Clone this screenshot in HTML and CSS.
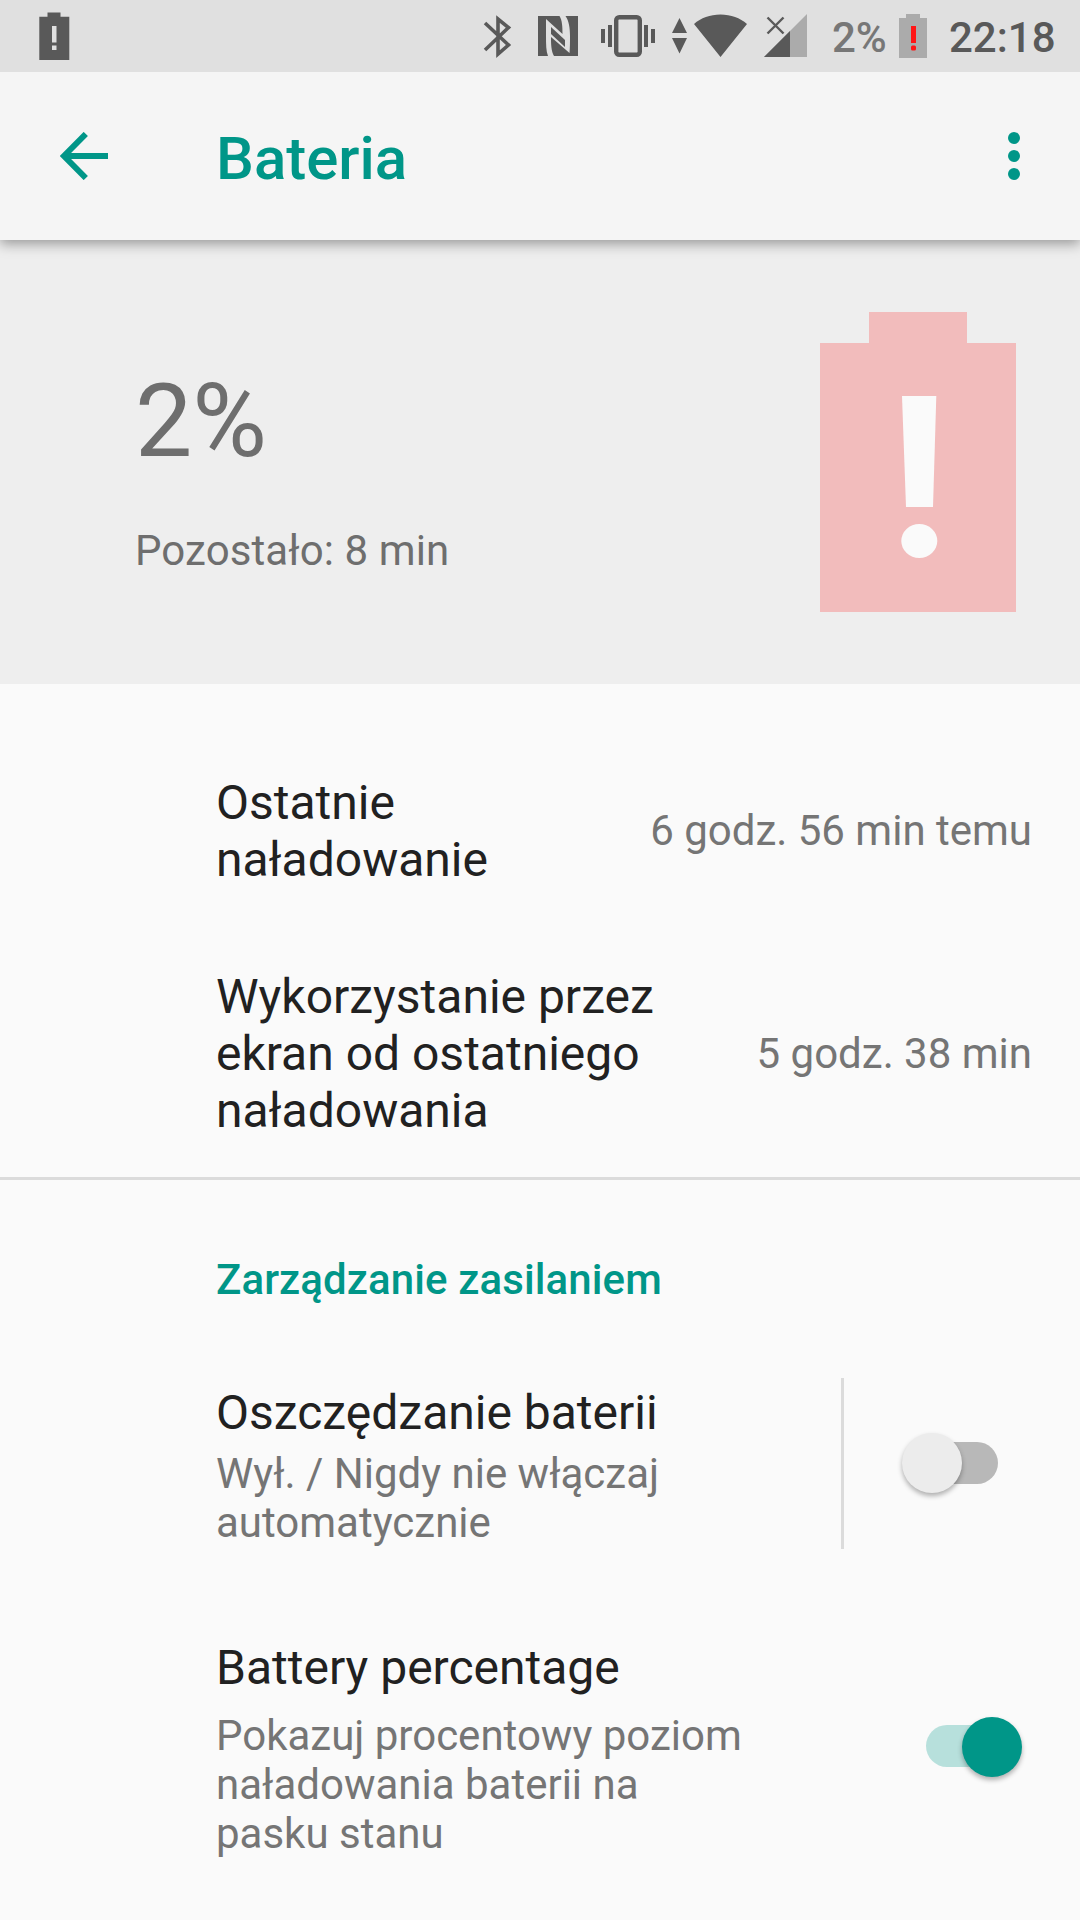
FILE: index.html
```html
<!DOCTYPE html>
<html lang="pl">
<head>
  <meta charset="UTF-8">
  <meta name="viewport" content="width=device-width, initial-scale=1">
  <title>Bateria</title>
  <link rel="stylesheet" href="styles.css">
</head>
<body>
  <div class="status-bar">
    <svg class="status-left" width="72" height="72" viewBox="0 0 72 72">
      <path fill="#595959" fill-rule="evenodd" d="M47.5 12.5h13v4.2h8.8V60h-30V16.700h8.200zM52 26v16.500h4.500V26zM52 45.500v4.500h4.500v-4.500z"/>
    </svg>
    <svg class="status-icons" width="350" height="72" viewBox="470 0 350 72">
      <!-- bluetooth -->
      <path fill="none" stroke="#595959" stroke-width="3.600" d="M485 23l23.500 22L498 54V19l10.500 8.500L485 50"/>
      <!-- nfc -->
      <path fill="#595959" d="M538 16h40v40h-40z"/>
      <path fill="#e0e0e0" d="M546 19l16.500 15c0-7-.3-14-3-18h6c3.500 5 4.500 12 4.500 20 0 6 0 12-.5 17L551 37c0 7 .2 14 3 19h-6c-2-5-2-12-2-20z"/>
      <path fill="#595959" d="M551 27l14 13v7L551 34z"/>
      <!-- vibrate -->
      <rect x="616.200" y="17.200" width="23.600" height="37.600" rx="3" fill="none" stroke="#595959" stroke-width="4.400"/>
      <path fill="#595959" d="M601 29h4v14h-4zM608 25h4v22h-4zM644 25h4v22h-4zM651 29h4v14h-4z"/>
      <!-- data arrows + wifi -->
      <path fill="#595959" d="M679.500 18l7.500 15h-15zM672 38h15l-7.500 15.500zM720.500 57L694 24c7-6 16-9.500 26.500-9.500S740 18 747 24z"/>
      <!-- mobile signal -->
      <path fill="#ababab" d="M807 14v43h-43z"/>
      <path fill="#595959" d="M790 31v26h-26z"/>
      <path fill="none" stroke="#595959" stroke-width="2.400" d="M767.500 17.500l16 16M783.500 17.500l-16 16"/>
    </svg>
    <span class="status-percent">2%</span>
    <svg class="status-battery" width="28" height="72" viewBox="899 0 28 72">
      <path fill="#ababab" d="M906 14h14v4h7v40h-28V18h7z"/>
      <path fill="#ff1515" d="M911 26h5v17h-5z"/>
      <rect x="911" y="45.500" width="5" height="5" rx="1.500" fill="#ff1515"/>
    </svg>
    <span class="status-time">22:18</span>
  </div>

  <div class="app-bar">
    <svg class="back" width="48" height="48" viewBox="0 0 48 48">
      <path fill="none" stroke="#009688" stroke-width="6" d="M48 24H4M25.800 2L4 24l21.800 22"/>
    </svg>
    <h1>Bateria</h1>
    <svg class="more" width="12" height="48" viewBox="0 0 12 48" fill="#009688">
      <circle cx="6" cy="6" r="6"/>
      <circle cx="6" cy="24" r="6"/>
      <circle cx="6" cy="42" r="6"/>
    </svg>
  </div>

  <div class="hero">
    <div>
      <div class="percent">2%</div>
      <div class="remaining">Pozostało: 8 min</div>
    </div>
    <svg width="196" height="300" viewBox="0 0 196 300">
      <path fill="#f2bcbc" d="M49 0h98v31h49v269H0V31h49z"/>
      <path fill="#fafafa" d="M82 84h34.300l-3.300 111H86z"/>
      <ellipse cx="99.300" cy="229" rx="18" ry="17" fill="#fafafa"/>
    </svg>
  </div>

  <div class="usage">
    <div class="row">
      <div class="title">Ostatnie<br>naładowanie</div>
      <div class="value">6 godz. 56 min temu</div>
    </div>
    <div class="row">
      <div class="title">Wykorzystanie przez<br>ekran od ostatniego<br>naładowania</div>
      <div class="value">5 godz. 38 min</div>
    </div>
  </div>

  <div class="settings">
    <h2>Zarządzanie zasilaniem</h2>
    <div class="setting saver">
      <div class="text">
        <div class="title">Oszczędzanie baterii</div>
        <div class="summary">Wył. / Nigdy nie włączaj<br>automatycznie</div>
      </div>
      <div class="separator"></div>
      <div class="switch"><div class="thumb"></div></div>
    </div>
    <div class="setting percentage">
      <div class="text">
        <div class="title">Battery percentage</div>
        <div class="summary">Pokazuj procentowy poziom<br>naładowania baterii na<br>pasku stanu</div>
      </div>
      <div class="switch on"><div class="thumb"></div></div>
    </div>
  </div>
</body>
</html>
```
FILE: styles.css
```css
:root {
  --accent: #009688;
  --bg: #fafafa;
  --text: #212121;
  --text-secondary: #757575;
  --divider: #dbdbdb;
}
*, *::before, *::after {
  box-sizing: border-box;
}
body {
  margin: 0;
  width: 1080px;
  height: 1920px;
  overflow: hidden;
  font-family: Roboto, sans-serif;
  background: var(--bg);
  color: var(--text);
}
svg {
  display: block;
  flex: none;
}
.status-bar {
  position: relative;
  z-index: 2;
  display: flex;
  height: 72px;
  background: #e0e0e0;
  line-height: 75px;
  white-space: nowrap;
}
.status-icons {
  margin-left: 398px;
}
.status-percent {
  width: 67px;
  margin-left: 12px;
  font-size: 42px;
  font-weight: 500;
  color: #777;
}
.status-time {
  margin-left: 22px;
  font-size: 42px;
  font-weight: 500;
  color: #595959;
}
.app-bar {
  position: relative;
  display: flex;
  align-items: center;
  height: 168px;
  padding: 0 60px;
  background: #f5f5f5;
  box-shadow: 0 4px 12px rgba(0, 0, 0, 0.36);
}
.app-bar h1 {
  flex: 1;
  margin: 4px 0 0 108px;
  font-size: 60px;
  font-weight: 500;
  color: var(--accent);
}
.hero {
  display: flex;
  justify-content: space-between;
  height: 444px;
  padding: 72px 64px 0 135px;
  background: #eee;
  color: #6e6e6e;
}
.percent {
  margin-top: 49px;
  font-size: 102px;
  line-height: 120px;
}
.remaining {
  margin-top: 45px;
  font-size: 42px;
  line-height: 49px;
  letter-spacing: 0.1px;
}
.usage {
  height: 496px;
  padding: 90px 48px 0 216px;
  border-bottom: 3px solid var(--divider);
}
.row {
  display: flex;
  align-items: center;
  justify-content: space-between;
  margin-bottom: 80px;
}
.title {
  font-size: 48px;
  line-height: 57px;
}
.value, .summary {
  font-size: 42px;
  line-height: 49px;
  color: var(--text-secondary);
}
.row:first-child .value {
  margin-bottom: 1px;
}
.settings {
  padding: 75px 0 0 216px;
}
.settings h2 {
  margin: 0;
  font-size: 42px;
  font-weight: 500;
  line-height: 49px;
  letter-spacing: 0.1px;
  color: var(--accent);
}
.setting {
  display: flex;
}
.setting .text {
  flex: 1;
}
.saver {
  height: 171px;
  margin-top: 74px;
}
.saver .text {
  padding-top: 6px;
}
.saver .summary {
  margin-top: 8px;
}
.separator {
  width: 3px;
  background: var(--divider);
}
.switch {
  display: flex;
  align-items: center;
  width: 78px;
  height: 42px;
  margin: 64px 82px 0 76px;
  border-radius: 21px;
  background: #b8b8b8;
}
.thumb {
  flex: none;
  width: 60px;
  height: 60px;
  margin-left: -18px;
  border-radius: 50%;
  background: #ececec;
  box-shadow: 0 3px 5px rgba(0, 0, 0, 0.3);
}
.percentage {
  margin-top: 90px;
}
.percentage .summary {
  margin-top: 15px;
}
.switch.on {
  justify-content: flex-end;
  margin: 86px 76px 0 0;
  background: #b7e0dc;
}
.on .thumb {
  margin: 1px -18px 0 0;
  background: var(--accent);
}
```
